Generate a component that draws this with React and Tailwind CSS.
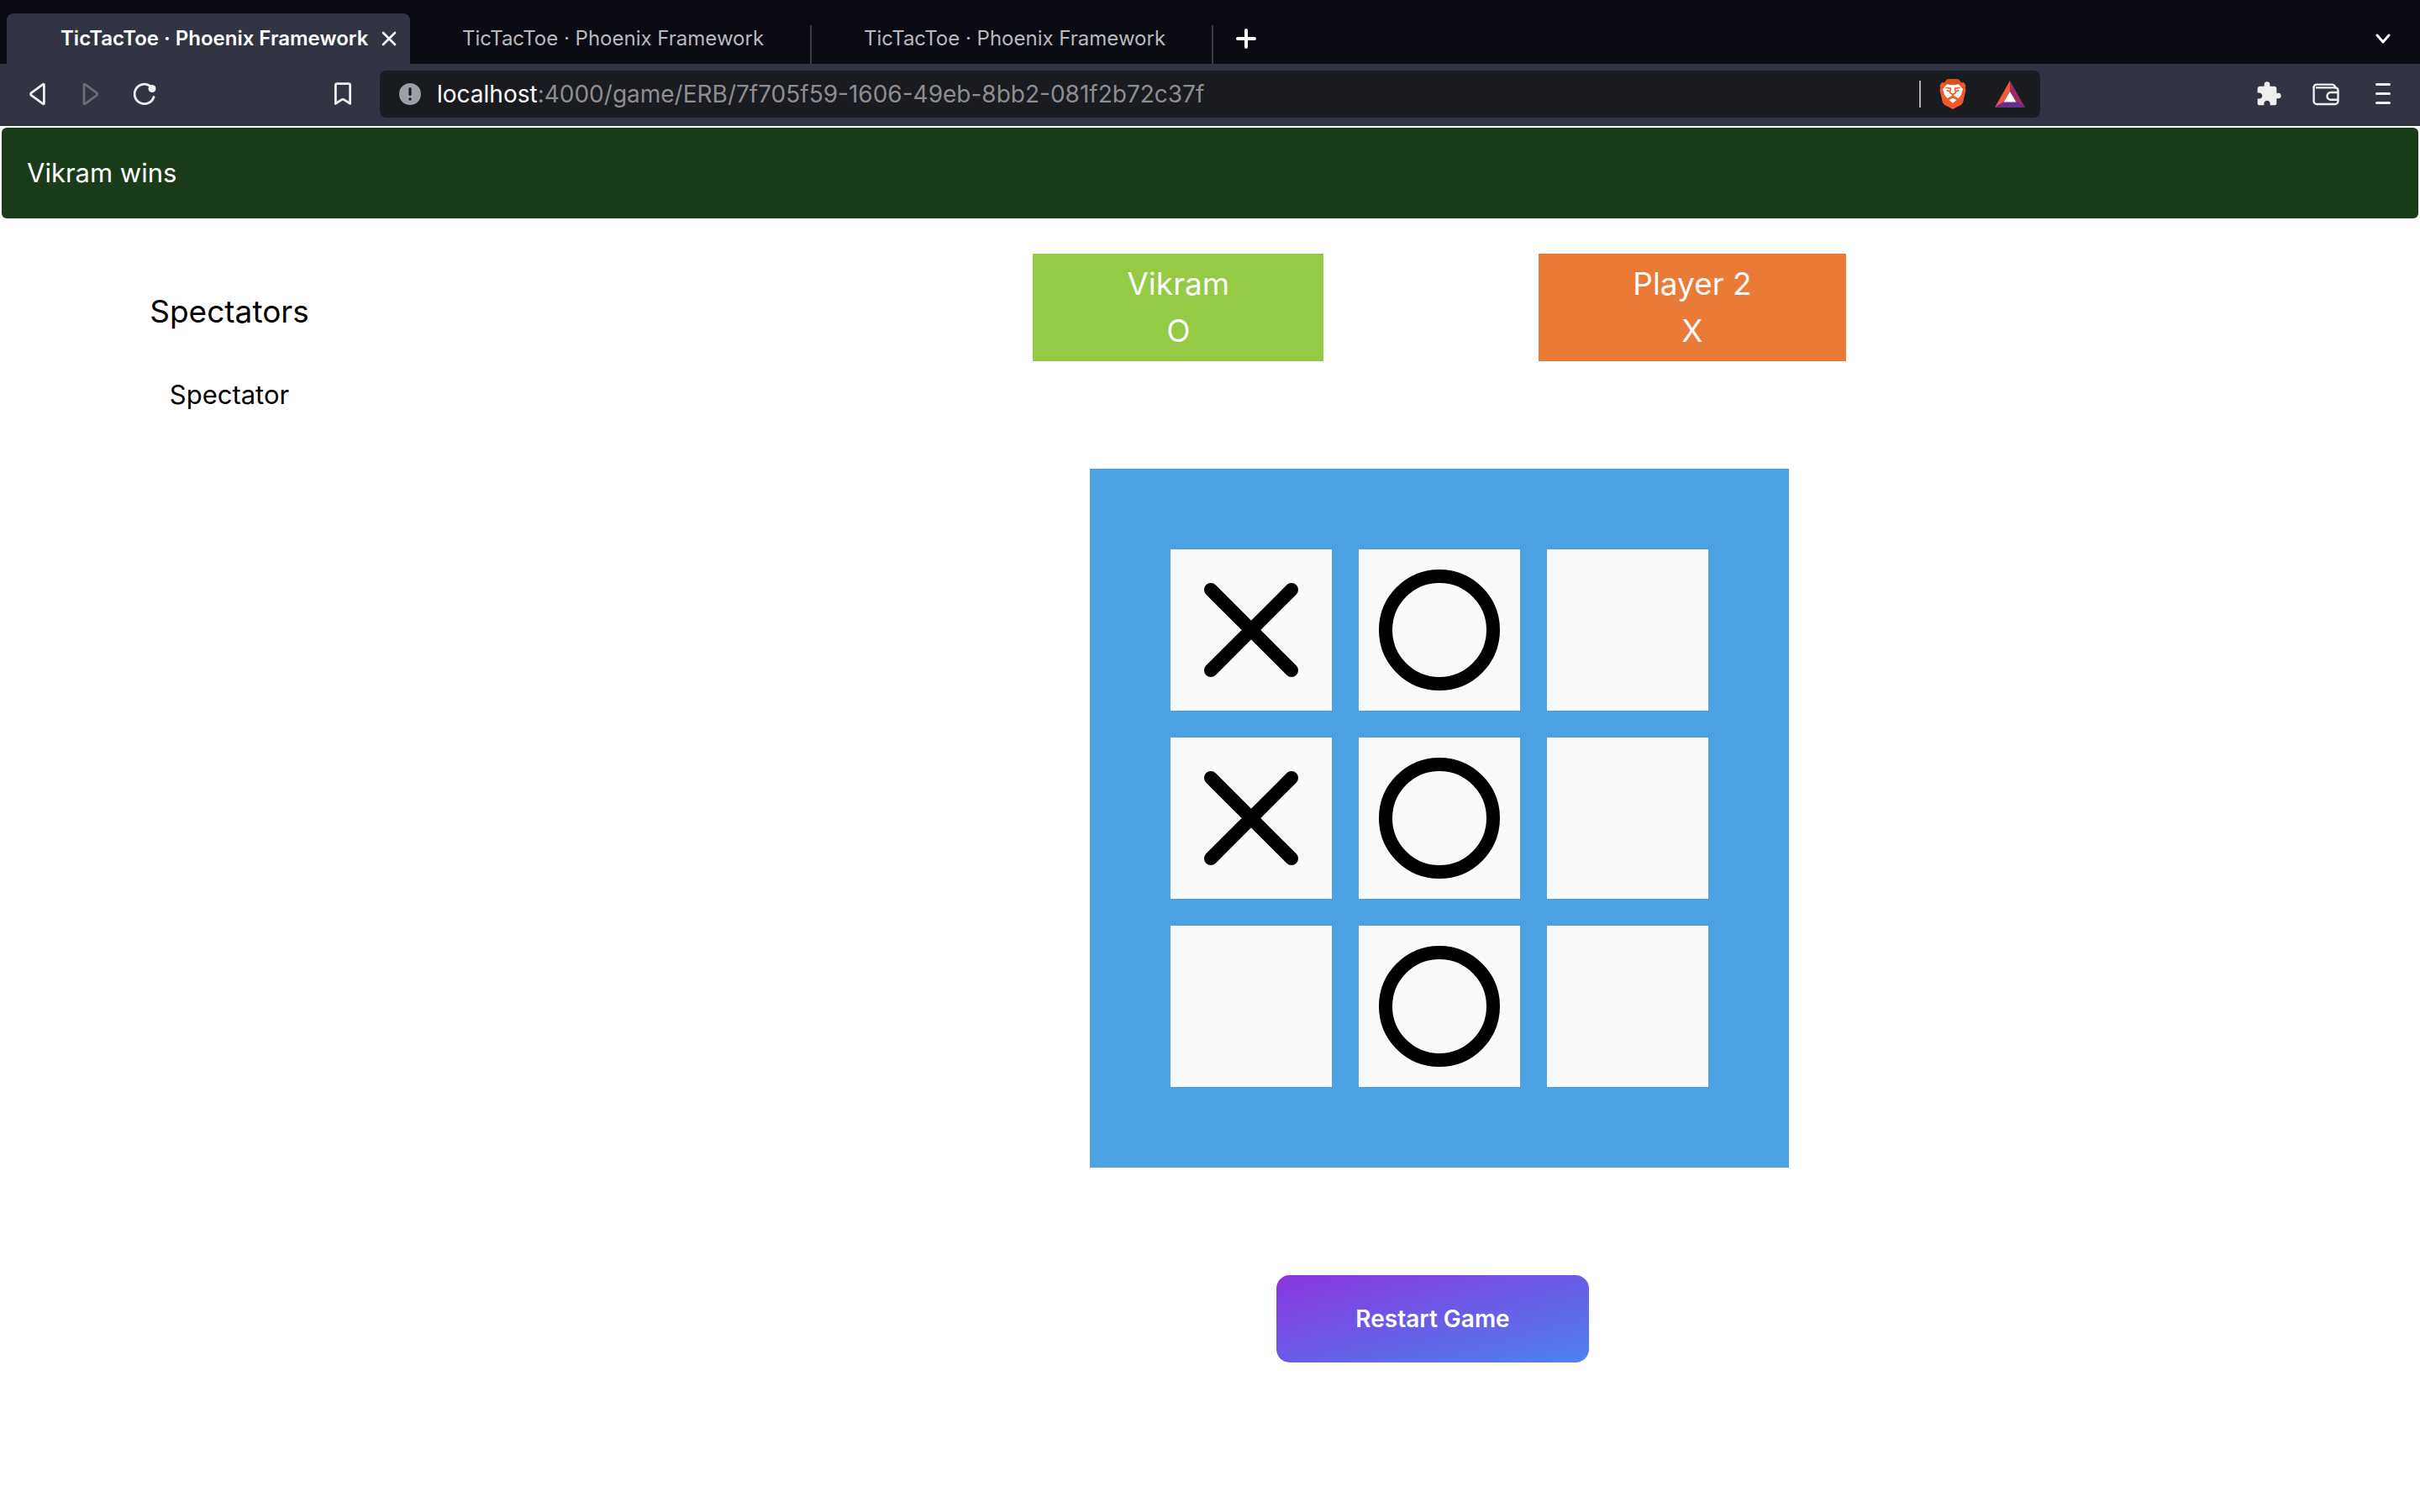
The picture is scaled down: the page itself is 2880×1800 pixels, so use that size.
import React from "react";
import { MdExtension } from "react-icons/md";

const UI = "font-['Inter','Liberation_Sans',sans-serif]";

function CloseIcon() {
  return (
    <svg width="18" height="18" viewBox="0 0 18 18" fill="none" stroke="#fff" strokeWidth="2.6" strokeLinecap="round">
      <path d="M2 2 16 16M16 2 2 16" />
    </svg>
  );
}

function BraveIcon() {
  return (
    <svg width="32" height="36" viewBox="0 0 32 36">
      <path d="M9 1h14l3 3.500 3-.5 2.500 4-.8 2 .8 3-3 13.500c-.5 2-1.500 3.500-3 4.500L16 36l-9.500-5C5 30 4 28.500 3.500 26.500L.5 13l.8-3-.8-2L3 4l3 .5Z" fill="#f1592a" />
      <path d="M9.500 0h13l3.500 4-3 2.500-7-1-7 1L6 4Z" fill="#d9501f" />
      <path d="M9 6.500c2.500 0 4.500.8 7 .8s4.500-.8 7-.8l5 5.500-1 3-1 4-3.500 4-4.500-2.500L16 19l-2 1.500L9.500 23 6 19l-1-4-1-3Z" fill="#fff" />
      <path d="M16 22.500 20.500 25 16 28.800 11.500 25Z" fill="#fff" />
      <path d="M7.500 10.500 13.500 11l-.8 5.500 3.300 2 3.300-2-.8-5.500 6-.5" fill="none" stroke="#f1592a" strokeWidth="1.500" strokeLinejoin="round" />
      <path d="m8.500 13.500 3.500 1.500M23.500 13.500 20 15M16 18.500v3M11 24l5-3 5 3" fill="none" stroke="#f1592a" strokeWidth="1.500" />
    </svg>
  );
}

function Tab({ active }) {
  if (active) {
    return (
      <div className="flex h-[60px] w-[480px] items-center justify-between rounded-t-lg bg-[#323443] pl-16 pr-4">
        <button type="button" className="text-[24px] leading-8 font-semibold whitespace-nowrap text-white">
          TicTacToe · Phoenix Framework
        </button>
        <button type="button" aria-label="Close tab">
          <CloseIcon />
        </button>
      </div>
    );
  }
  return (
    <div className="flex h-[60px] w-[478px] items-end">
      <div className="flex h-[60px] flex-1 items-center pl-[62px]">
        <button type="button" className="text-[24px] leading-8 whitespace-nowrap text-[#b9b9bd]">
          TicTacToe · Phoenix Framework
        </button>
      </div>
      <div className="h-[46px] w-0.5 bg-[#3a3a41]" />
    </div>
  );
}

function TabStrip() {
  return (
    <div className="flex h-[76px] items-end bg-[#0b0b14] pr-[34px] pl-2">
      <Tab active />
      <Tab />
      <Tab />
      <div className="flex h-[60px] flex-1 items-center justify-between pl-[26px]">
        <button type="button" aria-label="New tab">
          <svg width="26" height="26" viewBox="0 0 26 26" fill="none" stroke="#fff" strokeWidth="4" strokeLinecap="round">
            <path d="M13 3v20M3 13h20" />
          </svg>
        </button>
        <button type="button" aria-label="Search tabs">
          <svg width="20" height="14" viewBox="0 0 20 14" fill="none" stroke="#fff" strokeWidth="3" strokeLinecap="round" strokeLinejoin="round">
            <path d="m3 3 7 8 7-8" />
          </svg>
        </button>
      </div>
    </div>
  );
}

function Toolbar() {
  return (
    <div className="flex h-[74px] items-center justify-between bg-[#323443] pr-[30px] pb-0.5 pl-[34px]">
      <div className="flex flex-1 items-center">
        <div className="flex w-[418px] items-center justify-between pr-[34px]">
          <div className="flex items-center gap-10">
            <button type="button" aria-label="Back">
              <svg width="24" height="28" viewBox="0 0 24 28" fill="none" stroke="#efefef" strokeWidth="2.8" strokeLinejoin="round">
                <path d="M17.2 2.4 3.2 12.6a1.8 1.8 0 0 0 0 2.8l14 10.2c.6.4 1.2.1 1.2-.6V3c0-.7-.6-1-1.2-.6Z" />
              </svg>
            </button>
            <button type="button" aria-label="Forward" disabled>
              <svg width="20" height="28" viewBox="0 0 20 28" fill="none" stroke="#6b6d78" strokeWidth="2.8" strokeLinejoin="round">
                <path d="M3.2 2.4 17.2 12.6a1.8 1.8 0 0 1 0 2.8l-14 10.2c-.6.4-1.2.1-1.2-.6V3c0-.7.6-1 1.2-.6Z" />
              </svg>
            </button>
            <button type="button" aria-label="Reload">
              <svg width="28" height="28" viewBox="0 0 28 28" fill="none">
                <path d="M20 4A11.7 11.7 0 1 0 25 17.500" stroke="#efefef" strokeWidth="2.8" strokeLinecap="round" />
                <circle cx="23" cy="7.5" r="4.5" fill="#efefef" />
              </svg>
            </button>
          </div>
          <button type="button" aria-label="Bookmark">
            <svg width="20" height="28" viewBox="0 0 20 28" fill="none" stroke="#efefef" strokeWidth="2.8" strokeLinejoin="round">
              <path d="M1.4 3.2c0-.9.7-1.6 1.6-1.6h14c.9 0 1.6.7 1.6 1.6v22.2L12.500 21.400a4 4 0 0 0-5 0L1.400 25.400Z" />
            </svg>
          </button>
        </div>
        <div className="flex h-14 flex-1 items-center rounded-lg bg-[#1a1b20] pr-[18px] pl-[22px]">
          <svg className="shrink-0" width="28" height="28" viewBox="0 0 28 28">
            <circle cx="14" cy="14" r="13" fill="#9aa0a6" />
            <path d="M14 7.500v7" stroke="#1a1b20" strokeWidth="3.2" strokeLinecap="round" />
            <circle cx="14" cy="20" r="1.700" fill="#1a1b20" />
          </svg>
          <div className="ml-[18px] flex-1 text-[28px] leading-9 whitespace-nowrap text-[#8d8e91]">
            <span className="text-white">localhost</span>:4000/game/ERB/7f705f59-1606-49eb-8bb2-081f2b72c37f
          </div>
          <div className="h-8 w-0.5 bg-[#b0b0b4]" />
          <button type="button" aria-label="Brave Shields" className="ml-[22px]">
            <BraveIcon />
          </button>
          <button type="button" aria-label="Brave Rewards" className="ml-[34px]">
            <svg width="36" height="32" viewBox="0 0 36 32">
              <path d="M18 0 0 32l11-7 7-12Z" fill="#f15a36" />
              <path d="m18 0 18 32-11-7-7-12Z" fill="#9e2a63" />
              <path d="M0 32h36l-11-7H11Z" fill="#662d91" />
              <path d="m18 13 7.500 12.500h-15Z" fill="#fff" />
            </svg>
          </button>
        </div>
      </div>
      <div className="ml-64 flex items-center justify-end gap-9">
        <button type="button" aria-label="Extensions">
          <MdExtension size={32} color="#efefef" />
        </button>
        <button type="button" aria-label="Wallet">
          <svg width="34" height="28" viewBox="0 0 34 28" fill="none" stroke="#efefef" strokeWidth="2.4" strokeLinejoin="round">
            <path d="M1.600 5V22.500a3.500 3.500 0 0 0 3.500 3.500H27a3.500 3.500 0 0 0 3.500-3.500V10c0-2-1.400-3.600-3.500-3.600H4" />
            <path d="M1.600 6.500C1.600 4 3 2.600 5 2.600H23.500c1.200 0 2 .5 2.600 1.400L28.500 7.500" />
            <path d="M30.500 12H21.500c-2 0-4 2-4 4.400s2 4.400 4 4.400H30.500" />
          </svg>
        </button>
        <button type="button" aria-label="Menu">
          <svg width="28" height="28" viewBox="0 0 28 28" stroke="#efefef" strokeWidth="3" strokeLinecap="round">
            <path d="M6.500 2.500h15M6.500 13.500h15M6.500 24.500h15" />
          </svg>
        </button>
      </div>
    </div>
  );
}

function PlayerCard({ name, mark, color }) {
  return (
    <div className={"px-28 py-2 text-center text-[37px] leading-[56px] text-[#f9fafc] " + color}>
      <div>{name}</div>
      <div>{mark}</div>
    </div>
  );
}

function Cell({ mark, index }) {
  return (
    <button type="button" aria-label={"Cell " + (index + 1)} className="size-48 bg-[#f9fafc]">
      {mark && (
        <svg viewBox="0 0 24 24" className="size-full" fill="none" stroke="#000" strokeWidth="2" strokeLinecap="round">
          {mark === "X" ? <path d="m6 6 12 12M18 6 6 18" /> : <circle cx="12" cy="12" r="8" />}
        </svg>
      )}
    </button>
  );
}

const BOARD = ["X", "O", "", "X", "O", "", "", "O", ""];

export default function App() {
  return (
    <div className={"min-h-screen bg-white text-black " + UI}>
      <header>
        <TabStrip />
        <Toolbar />
      </header>
      <div className="p-0.5">
        <div role="status" className="rounded-md bg-[#1b3c1b] px-[30px] py-8 text-[31px] leading-[44px] text-white">
          Vikram wins
        </div>
      </div>
      <div className="flex pt-10">
        <aside className="w-[546px] shrink-0 pt-10 text-center">
          <h2 className="text-[37px] leading-[58px]">Spectators</h2>
          <p className="mt-12 text-[31px] leading-[44px]">Spectator</p>
        </aside>
        <main className="flex flex-1 flex-col items-center">
          <div className="flex gap-64">
            <PlayerCard name="Vikram" mark="O" color="bg-[#95ca44]" />
            <PlayerCard name="Player 2" mark="X" color="bg-[#e97b36]" />
          </div>
          <div className="mt-32 grid grid-cols-3 gap-8 bg-[#4ba1e2] p-24">
            {BOARD.map((m, i) => (
              <Cell key={i} mark={m} index={i} />
            ))}
          </div>
          <button
            type="button"
            className="mt-32 mr-4 rounded-2xl bg-[linear-gradient(to_bottom_right,#8a35de,#4c82f0)] px-[94px] py-8 text-[28px] leading-10 font-semibold text-white"
          >
            Restart Game
          </button>
        </main>
      </div>
    </div>
  );
}
